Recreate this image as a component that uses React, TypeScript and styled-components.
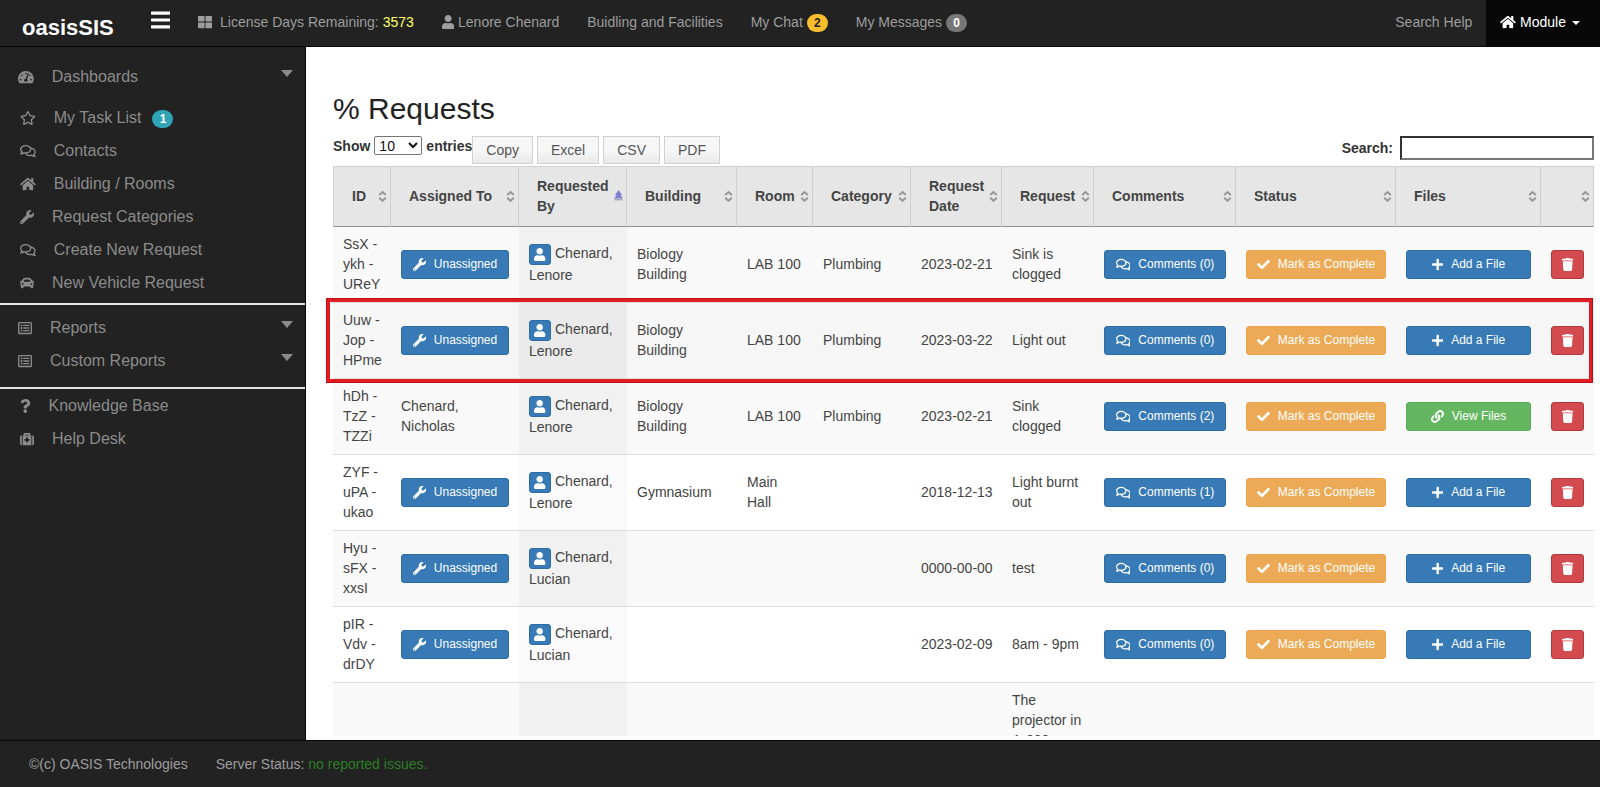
import React from "react";
import styled, { createGlobalStyle, css } from "styled-components";
import {
  FaBars,
  FaCar,
  FaCheck,
  FaHome,
  FaLink,
  FaMedkit,
  FaPlus,
  FaQuestion,
  FaRegComments,
  FaRegListAlt,
  FaRegStar,
  FaTachometerAlt,
  FaThLarge,
  FaTrash,
  FaUser,
  FaWrench,
} from "react-icons/fa";
import type { IconType } from "react-icons";

const GlobalStyle = createGlobalStyle`
  *, *::before, *::after { box-sizing: border-box; }
  body {
    margin: 0;
    background: #fff;
    color: #333;
    font: 14px/20px "Liberation Sans", Arial, sans-serif;
  }
  button, input, select { font: inherit; margin: 0; }
  a { color: inherit; text-decoration: none; }
`;

/* Icon glyphs share one height; their width follows the drawing's own proportions. */
const iconHeight = (height: number) => css`
  svg {
    flex: none;
    width: auto;
    height: ${height}px;
  }
  svg[viewBox="0 0 576 512"] { aspect-ratio: 9 / 8; }
  svg[viewBox="0 0 448 512"] { aspect-ratio: 7 / 8; }
  svg[viewBox="0 0 384 512"] { aspect-ratio: 3 / 4; }
`;

const Page = styled.div`
  display: flex;
  flex-direction: column;
  height: 100vh;
`;

/* ---------- top bar ---------- */

const TopBar = styled.header`
  display: flex;
  flex: none;
  height: 47px;
  background: #222;
  border-bottom: 1px solid #080808;
  color: #9d9d9d;
`;

const Brand = styled.a`
  width: 151px;
  padding: 12px 0 0 22px;
  color: #fff;
  font: bold 22px/32px "Liberation Sans", Arial, sans-serif;
`;

const MenuToggle = styled.button`
  display: flex;
  align-items: center;
  width: 33px;
  padding: 0 0 7px;
  border: 0;
  background: none;
  color: #fff;
  ${iconHeight(22)}
`;

const NavGroup = styled.nav<{ $end?: boolean }>`
  display: flex;
  margin-left: ${(p) => (p.$end ? "auto" : "0")};
`;

const NavLink = styled.a<{ $active?: boolean }>`
  display: flex;
  align-items: center;
  gap: 4px;
  padding: 0 14px 3px;
  white-space: nowrap;
  ${iconHeight(14)}
  ${(p) =>
    p.$active &&
    css`
      padding-right: 20px;
      background: #080808;
      color: #fff;
    `}
`;

const WideGap = styled.span`
  margin-left: 4px;
`;

const Days = styled.span`
  color: #ffff66;
`;

const Badge = styled.span<{ $tone: "info" | "warning" | "muted" }>`
  min-width: 21px;
  padding: 3px 7px;
  border-radius: 10px;
  font: bold 12px/12px "Liberation Sans", Arial, sans-serif;
  text-align: center;
  margin-top: 2px;
  color: ${(p) => (p.$tone === "warning" ? "#222" : "#fff")};
  background: ${(p) => ({ info: "#2fa4b5", warning: "#f7bd2d", muted: "#777" })[p.$tone]};
`;

const SmallCaret = styled.span`
  margin: 3px 0 0 2px;
  border: 4px solid transparent;
  border-top-color: currentColor;
  border-bottom: 0;
`;

/* ---------- side bar ---------- */

const Middle = styled.div`
  display: flex;
  flex: 1;
  min-height: 0;
`;

const SideBar = styled.nav`
  flex: none;
  width: 306px;
  padding-top: 13px;
  background: #222;
  border-right: 1px solid #080808;
  color: #8b8b8b;
  font-size: 16px;
`;

const SideList = styled.ul`
  margin: 0;
  padding: 0;
  list-style: none;
`;

const SubList = styled(SideList)`
  padding: 8px 0 4px;
`;

const SideLink = styled.a<{ $inset?: boolean }>`
  display: flex;
  align-items: center;
  gap: 18px;
  height: 33px;
  padding: 0 12px 0 ${(p) => (p.$inset ? 20 : 18)}px;
  ${iconHeight(14)}
`;

const SideLabel = styled.span`
  display: flex;
  align-items: center;
  gap: 11px;
`;

const SideCaret = styled.span`
  margin: 0 0 6px auto;
  border: 6px solid transparent;
  border-top: 7px solid #8b8b8b;
  border-bottom: 0;
`;

const Divider = styled.hr<{ $after: number }>`
  height: 2px;
  margin: 0 0 ${(p) => p.$after}px;
  border: 0;
  background: #e4e4e4;
`;

const ReportList = styled(SideList)`
  padding-bottom: 10px;
`;

/* ---------- content ---------- */

const Main = styled.main`
  flex: 1;
  min-width: 0;
  padding: 45px 6px 0 27px;
  overflow: hidden auto;
  scrollbar-width: none;
  border-bottom: 4px solid #fff;
`;

const Title = styled.h1`
  margin: 0 0 10px;
  color: #222;
  font-size: 30px;
  font-weight: normal;
  line-height: 34px;
`;

const Toolbar = styled.div`
  display: flex;
  align-items: flex-start;
  height: 30px;
`;

const LengthLabel = styled.label`
  display: flex;
  align-items: center;
  gap: 4px;
  height: 19px;
  font-weight: bold;
`;

const LengthSelect = styled.select`
  width: 48px;
  height: 19px;
  padding: 0;
  border: 1px solid #767676;
  border-radius: 2px;
  background-color: #fff;
  color: #111;
  font-weight: normal;
`;

const ExportGroup = styled.div`
  display: flex;
  gap: 4px;
`;

const ExportButton = styled.button`
  height: 28px;
  padding: 0 13px;
  border: 1px solid #d0d0d0;
  background: linear-gradient(#f6f6f6 0 55%, #e9e9e9);
  color: #555;
`;

const SearchLabel = styled.label`
  display: flex;
  align-items: center;
  gap: 7px;
  height: 24px;
  margin-left: auto;
  font-weight: bold;
`;

const SearchInput = styled.input`
  width: 194px;
  height: 24px;
  border: 2px solid;
  border-color: #333 #767676 #767676 #333;
  background: #fff;
`;

const Table = styled.table`
  width: 100%;
  table-layout: fixed;
  border-collapse: separate;
  border-spacing: 0;
  color: #444;
`;

const HeadCell = styled.th`
  height: 61px;
  padding: 0;
  border: solid #cfcfcf;
  border-width: 1px 1px 0 0;
  border-bottom: 1px solid #8f8f8f;
  background: #e6e6e6;
  &:first-child { border-left: 1px solid #cfcfcf; }
`;

const SortButton = styled.button`
  display: flex;
  align-items: center;
  width: 100%;
  padding: 0 3px 2px 18px;
  border: 0;
  background: none;
  color: #444;
  font-weight: bold;
  text-align: left;
  svg { flex: none; margin-left: auto; }
`;

const Row = styled.tr<{ $marked?: boolean }>`
  position: relative;
  > td { background: #fff; }
  > td:nth-child(3) { background: #fafafa; }
  &:nth-child(odd) > td { background: #f9f9f9; }
  &:nth-child(odd) > td:nth-child(3) { background: #f1f1f1; }
  &:not(:first-child) > td { border-top: 1px solid #ddd; }
  ${(p) =>
    p.$marked &&
    css`
      > td { background: #f6f6f6; }
      > td:nth-child(3) { background: #eaeaea; }
    `}
`;

const Cell = styled.td<{ $nowrap?: boolean }>`
  height: 75px;
  padding: 7px 10px 8px;
  white-space: ${(p) => (p.$nowrap ? "nowrap" : "normal")};
  vertical-align: middle;
`;

const Marker = styled.div`
  position: absolute;
  z-index: 1;
  inset: -4px 1px -5px -7px;
  border: 4px solid #e31b23;
  outline: 1px solid #b5121a;
  outline-offset: -1px;
  pointer-events: none;
`;

const tones = {
  primary: ["#387ab5", "#2e6da4"],
  warning: ["#ecaa56", "#eba44a"],
  success: ["#64b760", "#56ac54"],
  danger: ["#d34b4f", "#b5383c"],
};

const ActionButton = styled.button<{ $tone: keyof typeof tones }>`
  display: flex;
  align-items: center;
  justify-content: center;
  gap: 8px;
  width: 100%;
  height: 29px;
  padding: 0;
  border: 1px solid ${(p) => tones[p.$tone][1]};
  border-radius: 3px;
  background: ${(p) => tones[p.$tone][0]};
  color: #fff;
  font-size: 12px;
  white-space: nowrap;
  ${iconHeight(13)}
`;

const PersonButton = styled.button`
  display: inline-flex;
  align-items: center;
  justify-content: center;
  width: 22px;
  height: 21px;
  margin-right: 4px;
  padding: 0;
  border: 1px solid #2e6da4;
  border-radius: 3px;
  background: #387ab5;
  color: #fff;
  vertical-align: middle;
  ${iconHeight(13)}
`;

/* ---------- footer ---------- */

const Footer = styled.footer`
  display: flex;
  flex: none;
  align-items: center;
  gap: 28px;
  height: 47px;
  padding: 0 29px;
  border-top: 1px solid #080808;
  background: #222;
  color: #9d9d9d;
`;

const StatusOk = styled.span`
  color: #2a7f22;
`;

/* ---------- data ---------- */

const columns: [string, number][] = [
  ["ID", 58],
  ["Assigned To", 128],
  ["Requested By", 108],
  ["Building", 110],
  ["Room", 76],
  ["Category", 98],
  ["Request Date", 91],
  ["Request", 92],
  ["Comments", 142],
  ["Status", 160],
  ["Files", 145],
  ["", 53],
];

interface RequestRow {
  id: string;
  assigned?: string;
  by: string;
  building?: string;
  room?: string;
  category?: string;
  date: string;
  request: string;
  comments: number;
  hasFiles?: boolean;
  marked?: boolean;
}

const rows: RequestRow[] = [
  { id: "SsX - ykh - UReY", by: "Chenard, Lenore", building: "Biology Building", room: "LAB 100", category: "Plumbing", date: "2023-02-21", request: "Sink is clogged", comments: 0 },
  { id: "Uuw - Jop - HPme", by: "Chenard, Lenore", building: "Biology Building", room: "LAB 100", category: "Plumbing", date: "2023-03-22", request: "Light out", comments: 0, marked: true },
  { id: "hDh - TzZ - TZZi", assigned: "Chenard, Nicholas", by: "Chenard, Lenore", building: "Biology Building", room: "LAB 100", category: "Plumbing", date: "2023-02-21", request: "Sink clogged", comments: 2, hasFiles: true },
  { id: "ZYF - uPA - ukao", by: "Chenard, Lenore", building: "Gymnasium", room: "Main Hall", date: "2018-12-13", request: "Light burnt out", comments: 1 },
  { id: "Hyu - sFX - xxsI", by: "Chenard, Lucian", date: "0000-00-00", request: "test", comments: 0 },
  { id: "pIR - Vdv - drDY", by: "Chenard, Lucian", date: "2023-02-09", request: "8am - 9pm", comments: 0 },
];

const dashboardLinks: { label: string; icon: IconType; badge?: string }[] = [
  { label: "My Task List", icon: FaRegStar, badge: "1" },
  { label: "Contacts", icon: FaRegComments },
  { label: "Building / Rooms", icon: FaHome },
  { label: "Request Categories", icon: FaWrench },
  { label: "Create New Request", icon: FaRegComments },
  { label: "New Vehicle Request", icon: FaCar },
];

const SortIcon = ({ ascending }: { ascending?: boolean }) =>
  ascending ? (
    <svg width="9" height="12" viewBox="0 0 9 12" aria-hidden="true">
      <path d="M4.5 0 8 5H6.6L9 8.4H0L2.4 5H1z" fill="#7f7fd0" />
      <path d="M.5 9h8v1.4h-8z" fill="#a9a9b4" />
    </svg>
  ) : (
    <svg width="9" height="12" viewBox="0 0 9 12" fill="none" stroke="#979797" strokeWidth="2" aria-hidden="true">
      <path d="M1.2 5 4.5 2 7.8 5M1.2 7.8l3.3 3 3.3-3" />
    </svg>
  );

const RequestLine = ({ row }: { row: RequestRow }) => (
  <Row $marked={row.marked}>
    <Cell>
      {row.id}
      {row.marked && <Marker />}
    </Cell>
    <Cell>
      {row.assigned ?? (
        <ActionButton $tone="primary">
          <FaWrench />
          Unassigned
        </ActionButton>
      )}
    </Cell>
    <Cell>
      <PersonButton aria-label="View profile">
        <FaUser />
      </PersonButton>
      {row.by}
    </Cell>
    <Cell>{row.building}</Cell>
    <Cell>{row.room}</Cell>
    <Cell>{row.category}</Cell>
    <Cell $nowrap>{row.date}</Cell>
    <Cell>{row.request}</Cell>
    <Cell>
      <ActionButton $tone="primary">
        <FaRegComments />
        Comments ({row.comments})
      </ActionButton>
    </Cell>
    <Cell>
      <ActionButton $tone="warning">
        <FaCheck />
        Mark as Complete
      </ActionButton>
    </Cell>
    <Cell>
      {row.hasFiles ? (
        <ActionButton $tone="success">
          <FaLink />
          View Files
        </ActionButton>
      ) : (
        <ActionButton $tone="primary">
          <FaPlus />
          Add a File
        </ActionButton>
      )}
    </Cell>
    <Cell>
      <ActionButton $tone="danger" aria-label="Delete request">
        <FaTrash />
      </ActionButton>
    </Cell>
  </Row>
);

export default function App() {
  return (
    <Page>
      <GlobalStyle />
      <TopBar>
        <Brand href="#">oasisSIS</Brand>
        <MenuToggle aria-label="Toggle menu">
          <FaBars />
        </MenuToggle>
        <NavGroup>
          <NavLink href="#">
            <FaThLarge />
            <WideGap>
              License Days Remaining: <Days>3573</Days>
            </WideGap>
          </NavLink>
          <NavLink href="#">
            <FaUser />
            Lenore Chenard
          </NavLink>
          <NavLink href="#">Buidling and Facilities</NavLink>
          <NavLink href="#">
            My Chat <Badge $tone="warning">2</Badge>
          </NavLink>
          <NavLink href="#">
            My Messages <Badge $tone="muted">0</Badge>
          </NavLink>
        </NavGroup>
        <NavGroup $end>
          <NavLink href="#">Search Help</NavLink>
          <NavLink href="#" $active>
            <FaHome />
            Module
            <SmallCaret />
          </NavLink>
        </NavGroup>
      </TopBar>

      <Middle>
        <SideBar>
          <SideLink href="#">
            <FaTachometerAlt />
            Dashboards
            <SideCaret />
          </SideLink>
          <SubList>
            {dashboardLinks.map(({ label, icon: Icon, badge }) => (
              <li key={label}>
                <SideLink href="#" $inset>
                  <Icon />
                  <SideLabel>
                    {label}
                    {badge && <Badge $tone="info">{badge}</Badge>}
                  </SideLabel>
                </SideLink>
              </li>
            ))}
          </SubList>
          <Divider $after={6} />
          <ReportList>
            {["Reports", "Custom Reports"].map((label) => (
              <li key={label}>
                <SideLink href="#">
                  <FaRegListAlt />
                  {label}
                  <SideCaret />
                </SideLink>
              </li>
            ))}
          </ReportList>
          <Divider $after={0} />
          <SideList>
            <li>
              <SideLink href="#" $inset>
                <FaQuestion />
                Knowledge Base
              </SideLink>
            </li>
            <li>
              <SideLink href="#" $inset>
                <FaMedkit />
                Help Desk
              </SideLink>
            </li>
          </SideList>
        </SideBar>

        <Main>
          <Title>% Requests</Title>
          <Toolbar>
            <LengthLabel>
              Show
              <LengthSelect defaultValue="10">
                <option>10</option>
                <option>25</option>
                <option>50</option>
              </LengthSelect>
              entries
            </LengthLabel>
            <ExportGroup>
              <ExportButton>Copy</ExportButton>
              <ExportButton>Excel</ExportButton>
              <ExportButton>CSV</ExportButton>
              <ExportButton>PDF</ExportButton>
            </ExportGroup>
            <SearchLabel>
              Search:
              <SearchInput type="search" />
            </SearchLabel>
          </Toolbar>
          <Table>
            <colgroup>
              {columns.map(([name, width]) => (
                <col key={name} width={width} />
              ))}
            </colgroup>
            <thead>
              <tr>
                {columns.map(([name]) => (
                  <HeadCell key={name} scope="col">
                    <SortButton aria-label={name || "Delete"}>
                      {name}
                      <SortIcon ascending={name === "Requested By"} />
                    </SortButton>
                  </HeadCell>
                ))}
              </tr>
            </thead>
            <tbody>
              {rows.map((row) => (
                <RequestLine key={row.id} row={row} />
              ))}
              <Row>
                {columns.map(([name]) => (
                  <Cell key={name}>{name === "Request" && "The projector in A-200"}</Cell>
                ))}
              </Row>
            </tbody>
          </Table>
        </Main>
      </Middle>

      <Footer>
        <span>©(c) OASIS Technologies</span>
        <span>
          Server Status: <StatusOk>no reported issues.</StatusOk>
        </span>
      </Footer>
    </Page>
  );
}
